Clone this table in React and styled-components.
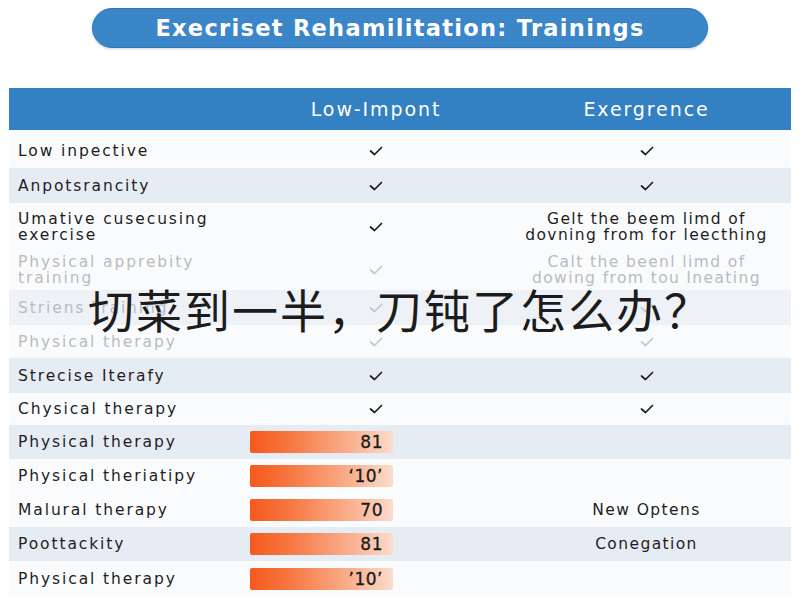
import React from "react";
import styled, { createGlobalStyle } from "styled-components";

const GlobalStyle = createGlobalStyle`
  html, body { margin: 0; padding: 0; background: #ffffff; }
  * { box-sizing: border-box; }
`;

const Page = styled.div`
  position: relative;
  width: 800px;
  height: 600px;
  overflow: hidden;
  padding-top: 8px;
  background: #ffffff;
  font-family: "DejaVu Sans", "Liberation Sans", sans-serif;
`;

const TitleBar = styled.div`
  margin: 0 auto;
  width: 616px;
  height: 40px;
  border-radius: 20px;
  background: #3a86c9;
  border: 1px solid #2f76b5;
  box-shadow: 0 1px 3px rgba(40, 90, 140, 0.25);
  color: #fff;
  font-family: "DejaVu Sans", sans-serif;
  font-weight: 700;
  font-size: 22.5px;
  letter-spacing: 1.3px;
  display: flex;
  align-items: center;
  justify-content: center;
`;

const Table = styled.div`
  margin: 40px 9px 0;
  display: flex;
  flex-direction: column;
`;

const cols = "241px 252px 1fr";

const HeaderRow = styled.div`
  display: grid;
  grid-template-columns: ${cols};
  height: 42px;
  background: #3380c3;
  color: #fff;
  font-size: 19px;
  letter-spacing: 1.9px;
  align-items: center;
`;

const HeaderCell = styled.div`
  text-align: center;
`;

const Row = styled.div`
  display: grid;
  grid-template-columns: ${cols};
  height: ${(p) => p.$h}px;
  padding-top: ${(p) => p.$pt || 0}px;
  background: ${(p) => (p.$shade ? (p.$faded ? "#eef2f7" : "#e6ecf4") : "#fafbfd")};
  align-items: center;
  color: ${(p) => (p.$faded ? "#b9bcc0" : "#1e1e1e")};
`;

const Label = styled.div`
  padding-left: 9px;
  font-size: 15.5px;
  line-height: 16px;
  letter-spacing: 1.9px;
  white-space: nowrap;
`;

const Center = styled.div`
  display: flex;
  justify-content: center;
  align-items: center;
  text-align: center;
  font-size: 15.5px;
  line-height: 16px;
  letter-spacing: 1.4px;
  white-space: nowrap;
`;

const BarCell = styled.div`
  display: flex;
  align-items: center;
`;

const Bar = styled.div`
  width: 143px;
  height: 22px;
  border-radius: 2px;
  background: linear-gradient(90deg, #f5581c 0%, #f77a45 30%, #f9b08e 70%, #fbdccc 100%);
  display: flex;
  align-items: center;
  justify-content: flex-end;
  padding-right: 10px;
  font-size: 17px;
  font-weight: 500;
  color: #1a1a1a;
  letter-spacing: 0.5px;
  -webkit-text-stroke: 0.3px #1a1a1a;
`;

const Overlay = styled.div`
  position: absolute;
  left: 88px;
  top: 280px;
  font-family: "Noto Sans CJK SC", "Noto Sans", sans-serif;
  font-size: 46px;
  line-height: 56px;
  color: #1c1c1c;
  white-space: nowrap;
  letter-spacing: 2px;
`;

const Check = ({ faded }) => (
  <svg width="14" height="12" viewBox="0 0 14 12">
    <polyline
      points="1.5,6 5.5,9.5 12.5,2.5"
      fill="none"
      stroke={faded ? "#c4c7cb" : "#1e1e1e"}
      strokeWidth="1.7"
      strokeLinecap="round"
      strokeLinejoin="round"
    />
  </svg>
);

const rows = [
  { h: 38, pt: 3, label: "Low inpective", c2: "check", c3: "check" },
  { h: 35, label: "Anpotsrancity", c2: "check", c3: "check", shade: true },
  { h: 47, label: ["Umative cusecusing", "exercise"], c2: "check", c3: ["Gelt the beem limd of", "dovning from for leecthing"] },
  { h: 40, label: ["Physical apprebity", "training"], c2: "check", c3: ["Calt the beenl limd of", "dowing from tou lneating"], faded: true },
  { h: 35, label: "Striens Training", c2: "check", c3: "check", faded: true, shade: true },
  { h: 33, label: "Physical therapy", c2: "check", c3: "check", faded: true },
  { h: 35, label: "Strecise Iterafy", c2: "check", c3: "check", shade: true },
  { h: 32, label: "Chysical therapy", c2: "check", c3: "check" },
  { h: 34, label: "Physical therapy", bar: "81", shade: true },
  { h: 34, label: "Physical theriatipy", bar: "‘10’" },
  { h: 34, label: "Malural therapy", bar: "70", c3: "New Optens" },
  { h: 34, label: "Poottackity", bar: "81", c3: "Conegation", shade: true },
  { h: 35, label: "Physical therapy", bar: "’10’" },
];

const renderText = (t) =>
  Array.isArray(t) ? (
    <span>
      {t[0]}
      <br />
      {t[1]}
    </span>
  ) : (
    t
  );

const renderCell = (v, faded) => {
  if (v === "check") return <Center><Check faded={faded} /></Center>;
  if (!v) return <Center />;
  return <Center>{renderText(v)}</Center>;
};

export default function App() {
  return (
    <>
      <GlobalStyle />
      <Page>
        <TitleBar>Execriset Rehamilitation: Trainings</TitleBar>
        <Table>
          <HeaderRow>
            <HeaderCell />
            <HeaderCell>Low-Impont</HeaderCell>
            <HeaderCell>Exergrence</HeaderCell>
          </HeaderRow>
          {rows.map((r, i) => (
            <Row key={i} $h={r.h} $pt={r.pt} $shade={r.shade} $faded={r.faded}>
              <Label>{renderText(r.label)}</Label>
              {r.bar ? (
                <BarCell>
                  <Bar>{r.bar}</Bar>
                </BarCell>
              ) : (
                renderCell(r.c2, r.faded)
              )}
              {renderCell(r.c3, r.faded)}
            </Row>
          ))}
        </Table>
        <Overlay>切菜到一半，刀钝了怎么办？</Overlay>
      </Page>
    </>
  );
}
